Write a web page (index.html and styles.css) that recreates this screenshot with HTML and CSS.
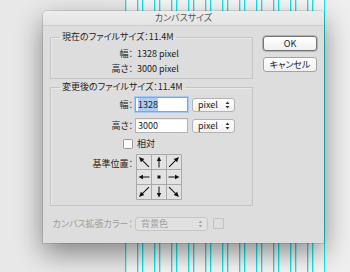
FILE: index.html
```html
<!DOCTYPE html>
<html lang="ja">
<head>
<meta charset="utf-8">
<link rel="stylesheet" href="styles.css">
</head>
<body>
<div class="canvas"></div>
<div class="dialog">
  <div class="titlebar">カンバスサイズ</div>
  <div class="dbody">
    <div class="main">
      <fieldset class="group g1">
        <legend>現在のファイルサイズ：11.4M</legend>
        <div class="row"><span class="lbl">幅：</span><span class="val">1328 pixel</span></div>
        <div class="row"><span class="lbl">高さ：</span><span class="val">3000 pixel</span></div>
      </fieldset>
      <fieldset class="group g2">
        <legend>変更後のファイルサイズ：11.4M</legend>
        <div class="row r-in first"><span class="lbl">幅：</span><span class="inp focus"><span class="hl">1328</span></span><span class="sel"><span>pixel</span><svg class="ud" width="5" height="8" viewBox="0 0 5 8"><path d="M2.5 0.5L4.5 3H0.5Z M2.5 7.5L4.5 5H0.5Z" fill="#333"/></svg></span></div>
        <div class="row r-in"><span class="lbl">高さ：</span><span class="inp">3000</span><span class="sel"><span>pixel</span><svg class="ud" width="5" height="8" viewBox="0 0 5 8"><path d="M2.5 0.5L4.5 3H0.5Z M2.5 7.5L4.5 5H0.5Z" fill="#333"/></svg></span></div>
        <div class="row r-chk"><span class="lbl"><span class="chk"></span></span><span class="val">相対</span></div>
        <div class="row r-grid"><span class="lbl top">基準位置：</span>
          <svg class="anchor" width="46" height="46" viewBox="0 0 46 46">
            <defs>
              <g id="arr"><line x1="0" y1="5.5" x2="0" y2="-2" stroke="#111" stroke-width="1"/><path d="M-2.2 -1 L2.2 -1 L0 -5.5 Z" fill="#111"/></g>
              <g id="darr"><line x1="0" y1="7" x2="0" y2="-3" stroke="#111" stroke-width="1"/><path d="M-2.4 -2 L2.4 -2 L0 -7 Z" fill="#111"/></g>
            </defs>
            <rect x="0" y="0" width="46" height="46" fill="#e2e2e2"/>
            <path d="M0.5 0.5H45.5V45.5H0.5Z M15.5 0.5V45.5 M30.5 0.5V45.5 M0.5 15.5H45.5 M0.5 30.5H45.5" fill="none" stroke="#a9a9a9"/>
            <use href="#darr" transform="translate(8 8) rotate(-45)"/>
            <use href="#arr" transform="translate(23 8)"/>
            <use href="#darr" transform="translate(38 8) rotate(45)"/>
            <use href="#arr" transform="translate(8 23) rotate(-90)"/>
            <rect x="21.5" y="21.5" width="3" height="3" fill="#111"/>
            <use href="#arr" transform="translate(38 23) rotate(90)"/>
            <use href="#darr" transform="translate(8 38) rotate(-135)"/>
            <use href="#arr" transform="translate(23 38) rotate(180)"/>
            <use href="#darr" transform="translate(38 38) rotate(135)"/>
          </svg>
        </div>
      </fieldset>
      <div class="row extend"><span class="lbl wide">カンバス拡張カラー：</span><span class="sel dis"><span>背景色</span><svg class="ud" width="5" height="8" viewBox="0 0 5 8"><path d="M2.5 0.5L4.5 3H0.5Z M2.5 7.5L4.5 5H0.5Z" fill="#aaa"/></svg></span><span class="swatch"></span></div>
    </div>
    <div class="buttons">
      <div class="btn ok">OK</div>
      <div class="btn">キャンセル</div>
    </div>
  </div>
</div>
</body>
</html>
```
FILE: styles.css
```css
html, body {
  margin: 0;
  width: 350px;
  height: 272px;
  overflow: hidden;
}
body {
  position: relative;
  background: linear-gradient(to right, #e8e8e8, #efefef);
  font-family: "Noto Sans CJK JP", "Noto Sans", sans-serif;
  font-size: 9px;
  color: #222;
  font-feature-settings: "palt";
}
.canvas {
  position: absolute;
  left: 125px;
  top: 0;
  width: 200px;
  height: 272px;
  background:
    repeating-linear-gradient(to right, #12e6e6 0 1px, rgba(40, 225, 225, .35) 1px 2px, transparent 2px 12px, #12e6e6 12px 13px, rgba(40, 225, 225, .35) 13px 14px, transparent 14px 17px),
    #f8f8f8;
}
.dialog {
  position: absolute;
  left: 43px;
  top: 11px;
  width: 281px;
  height: 232px;
  background: #dddddd;
  border-radius: 4px 4px 0 0;
  box-shadow: 0 10px 28px rgba(0, 0, 0, .45), 0 0 0 1px rgba(0, 0, 0, .1);
  display: flex;
  flex-direction: column;
}
.titlebar {
  height: 14px;
  line-height: 14px;
  text-align: center;
  color: #555;
  background: linear-gradient(#ededed, #e3e3e3);
  border-bottom: 1px solid #cdcdcd;
  border-radius: 4px 4px 0 0;
}
.dbody {
  display: flex;
  padding: 5px 7px 0 7px;
  gap: 10px;
}
.main {
  width: 204px;
  display: flex;
  flex-direction: column;
}
fieldset.group {
  margin: 0;
  padding: 0;
  min-width: 0;
  border: 1px solid #c4c4c4;
  box-shadow: inset 1px 1px 0 #e9e9e9;
}
legend {
  margin-left: 9px;
  padding: 0 2px;
  line-height: 12px;
}
fieldset.g1 { padding: 3px 0 2px; }
fieldset.g2 { margin-top: 2px; padding: 0 0 5px; }
.row {
  display: flex;
  align-items: center;
  height: 15px;
}
.lbl {
  width: 82px;
  flex: none;
  text-align: right;
  display: flex;
  justify-content: flex-end;
  align-items: center;
}
.val { margin-left: 4px; }
.r-in { margin-top: 6px; }
.r-in.first { margin-top: 4px; }
.inp {
  margin-left: 2px;
  width: 53px;
  height: 15px;
  box-sizing: border-box;
  border: 1px solid #b3b3b3;
  background: #fff;
  padding-left: 2px;
  line-height: 13px;
  box-shadow: inset 0 1px 1px rgba(0,0,0,.08);
}
.inp.focus {
  border-color: #7ba6e3;
  box-shadow: 0 0 0 1px #a9c7ef;
}
.hl { background: #aecdf4; }
.sel {
  margin-left: 4px;
  width: 43px;
  height: 14px;
  box-sizing: border-box;
  border: 1px solid #b3b3b3;
  border-radius: 3px;
  background: linear-gradient(#ffffff, #f1f1f1);
  display: flex;
  align-items: center;
  justify-content: space-between;
  padding: 0 4px 0 5px;
}
.r-chk { margin-top: 4px; height: 13px; }
.chk {
  width: 8px;
  height: 8px;
  border: 1px solid #9a9a9a;
  border-radius: 2px;
  background: #fff;
}
.r-grid {
  margin-top: 4px;
  height: auto;
  align-items: flex-start;
}
.lbl.top { margin-top: 3px; }
.anchor { margin-left: 3px; display: block; }
.extend { margin-top: 10px; }
.lbl.wide { width: 83px; color: #9c9c9c; }
.sel.dis {
  width: 73px;
  margin-left: 2px;
  color: #9c9c9c;
  background: #e1e1e1;
  border-color: #c6c6c6;
}
.swatch {
  margin-left: 5px;
  width: 9px;
  height: 9px;
  border: 1px solid #c2c2c2;
  border-radius: 1px;
}
.buttons {
  padding-top: 5px;
  display: flex;
  flex-direction: column;
  gap: 6px;
}
.btn {
  width: 54px;
  height: 15px;
  box-sizing: border-box;
  border: 1px solid #a4a4a4;
  border-radius: 3px;
  background: linear-gradient(#ffffff, #f0f0f0);
  text-align: center;
  line-height: 13px;
}
.btn.ok {
  border-color: #747474;
  box-shadow: 0 0 0 0.5px #8a8a8a;
}
```
